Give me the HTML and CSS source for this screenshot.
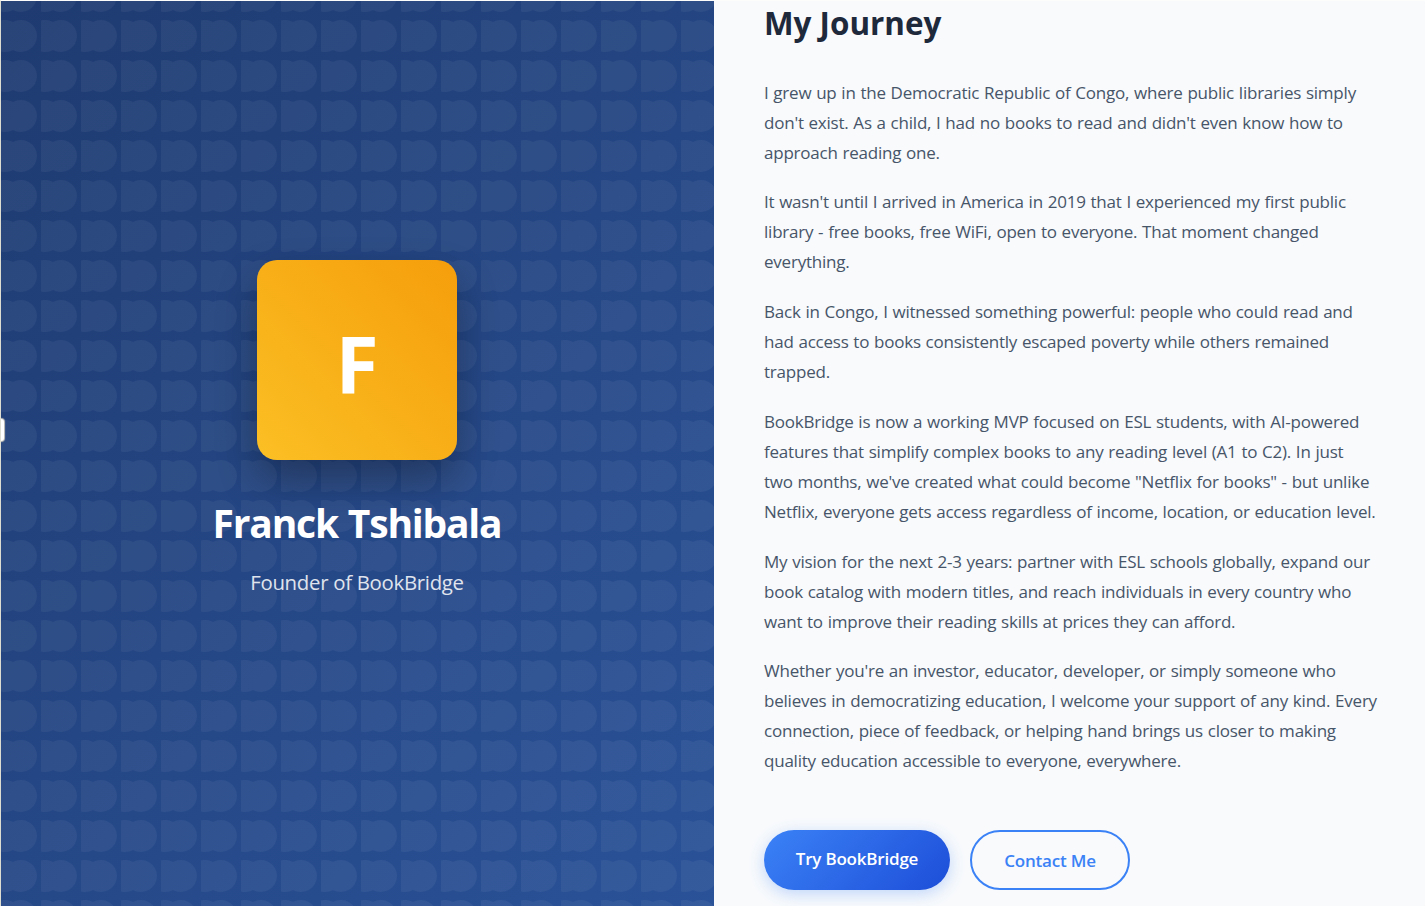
FILE: index.html
```html
<!DOCTYPE html>
<html lang="en">
<head>
<meta charset="utf-8">
<title>My Journey - BookBridge</title>
<link rel="stylesheet" href="styles.css">
</head>
<body>
<main class="page">
  <section class="profile">
    <svg class="pattern" aria-hidden="true">
      <defs>
        <pattern id="scallops" width="40" height="40" y="19" patternUnits="userSpaceOnUse">
          <path d="M0 .5A16 16 0 0 1 12 2.1A16 16 0 1 1 12 29.9A16 16 0 0 1 0 31.5Z" fill="#fff" fill-opacity=".05"/>
        </pattern>
      </defs>
      <rect width="100%" height="100%" fill="url(#scallops)"/>
    </svg>
    <div class="intro">
      <div class="avatar">F</div>
      <h1 class="name">Franck Tshibala</h1>
      <p class="role">Founder of BookBridge</p>
    </div>
    <span class="handle"></span>
  </section>
  <section class="story">
    <h2 class="title">My Journey</h2>
    <div class="copy">
      <p>I grew up in the Democratic Republic of Congo, where public libraries simply<br>don't exist. As a child, I had no books to read and didn't even know how to<br>approach reading one.</p>
      <p>It wasn't until I arrived in America in 2019 that I experienced my first public<br>library - free books, free WiFi, open to everyone. That moment changed<br>everything.</p>
      <p>Back in Congo, I witnessed something powerful: people who could read and<br>had access to books consistently escaped poverty while others remained<br>trapped.</p>
      <p>BookBridge is now a working MVP focused on ESL students, with AI-powered<br>features that simplify complex books to any reading level (A1 to C2). In just<br>two months, we've created what could become "Netflix for books" - but unlike<br>Netflix, everyone gets access regardless of income, location, or education level.</p>
      <p>My vision for the next 2-3 years: partner with ESL schools globally, expand our<br>book catalog with modern titles, and reach individuals in every country who<br>want to improve their reading skills at prices they can afford.</p>
      <p>Whether you're an investor, educator, developer, or simply someone who<br>believes in democratizing education, I welcome your support of any kind. Every<br>connection, piece of feedback, or helping hand brings us closer to making<br>quality education accessible to everyone, everywhere.</p>
    </div>
    <div class="actions">
      <a class="btn btn-primary">Try BookBridge</a>
      <a class="btn btn-outline">Contact Me</a>
    </div>
  </section>
</main>
</body>
</html>
```
FILE: styles.css
```css
* { box-sizing: border-box; margin: 0; padding: 0; }
body { font-family: "Open Sans", "Noto Sans", sans-serif; background: #f8fafc; overflow: hidden; }
.page { display: grid; grid-template-columns: 713px 1fr; height: 906px; border-left: 1px solid #deddd2; border-top: 1px solid #fdfdfb; overflow: hidden; }
.profile { position: relative; display: flex; justify-content: center; padding: 259px 1px 0 0; background: linear-gradient(135deg, #1e3a70 0%, #2a5298 100%); overflow: hidden; }
.pattern { position: absolute; inset: 0; width: 100%; height: 100%; }
.intro { position: relative; display: flex; flex-direction: column; align-items: center; color: #fff; }
.avatar { display: flex; align-items: center; justify-content: center; width: 200px; height: 200px; border-radius: 20px; background: linear-gradient(45deg, #fbbf24, #f59e0b); box-shadow: 0 20px 40px rgba(0, 0, 0, .3); font-size: 78.5px; font-weight: 700; line-height: 1; padding-top: 7px; }
.name { margin-top: 35px; font-size: 39px; line-height: 56px; font-weight: 700; letter-spacing: -1.2px; word-spacing: 1px; white-space: nowrap; }
.role { margin-top: 16px; font-size: 20.4px; line-height: 30px; letter-spacing: -.3px; opacity: .85; white-space: nowrap; }
.handle { position: absolute; left: -6px; top: 418px; width: 9px; height: 22px; border-radius: 3px; background: #fff; box-shadow: 0 0 1px 1px #c8c5bd; }
.story { padding: 0 0 0 50px; }
.title { margin-top: -2px; color: #1e293b; font-size: 31.4px; line-height: 48px; font-weight: 700; }
.copy { display: flex; flex-direction: column; gap: 20px; margin-top: 30.7px; color: #475569; font-size: 17px; line-height: 29.92px; letter-spacing: -.22px; word-spacing: .6px; white-space: nowrap; }
.actions { display: flex; gap: 20px; margin-top: 53.9px; }
.btn { display: flex; align-items: center; justify-content: center; height: 60px; border-radius: 30px; font-size: 17px; font-weight: 600; letter-spacing: -.2px; }
.btn-primary { width: 186px; padding-bottom: 3px; color: #fff; background: linear-gradient(135deg, #3b82f6, #1d4ed8); box-shadow: 0 4px 15px rgba(59, 130, 246, .3); }
.btn-outline { width: 160px; color: #3b82f6; border: 2px solid #3b82f6; }
```
